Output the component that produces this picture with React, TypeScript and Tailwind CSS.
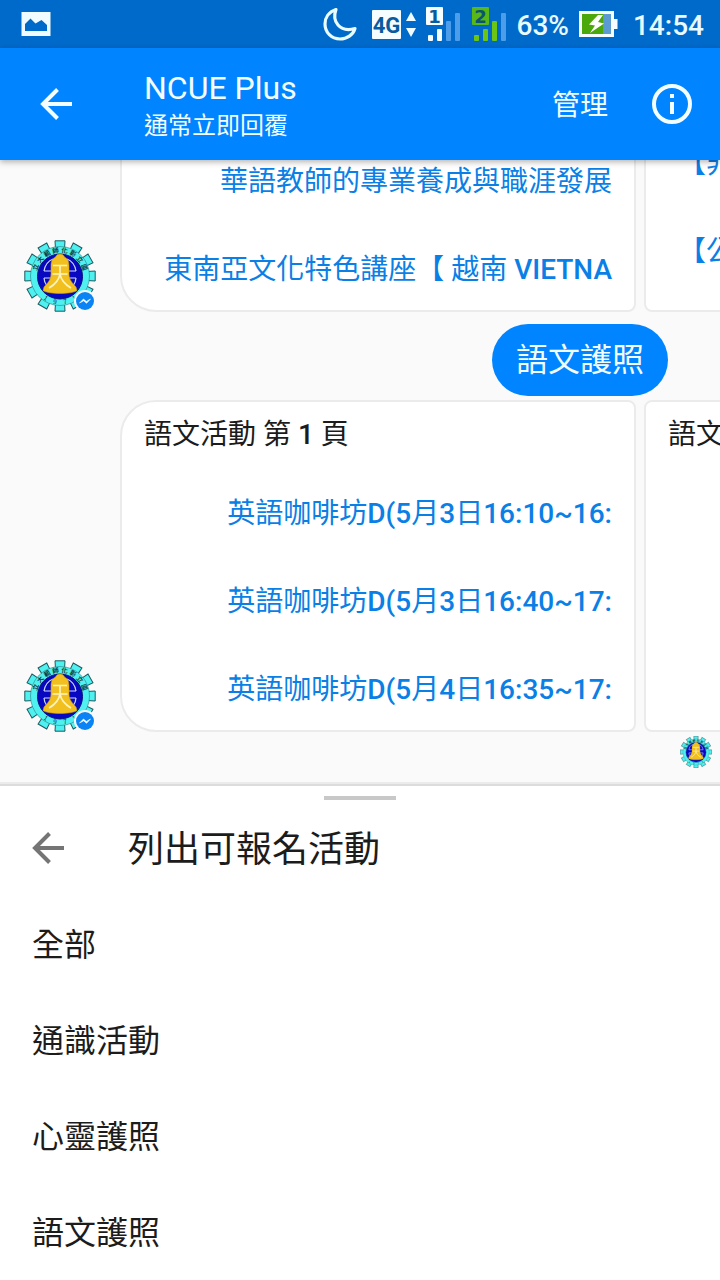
import React from "react";

const TEETH = Array.from({ length: 12 }, (_, i) => i * 30);
const SEAL_TOP = ["立", "大", "範", "師", "化", "彰", "立", "國"];
const SEAL_BOTTOM = ["1", "9", "7", "1"];

function Seal({ className }: { className: string }) {
  return (
    <svg viewBox="0 0 72 72" className={className} role="img" aria-label="NCUE">
      <g fill="#4ff0f0" stroke="#1d5a60" strokeWidth="1">
        {TEETH.map((a) => (
          <path key={a} d="M31.500 9 L31 .8 H41 L40.500 9" transform={`rotate(${a} 36 36)`} />
        ))}
      </g>
      <circle cx="36" cy="36" r="29.500" fill="#4ff0f0" stroke="#2b7f86" strokeWidth=".6" />
      <circle cx="36" cy="36.500" r="22.500" fill="#0808c0" stroke="#06107a" strokeWidth="1" />
      <g fontFamily="Noto Sans CJK TC, sans-serif" fontSize="6.500" fontWeight="700" fill="#0d3540" textAnchor="middle">
        {SEAL_TOP.map((c, i) => (
          <text key={i} x="36" y="12.500" transform={`rotate(${-70 + i * 20} 36 36)`}>{c}</text>
        ))}
        {SEAL_BOTTOM.map((c, i) => (
          <text key={i} x="36" y="64.500" fontWeight="400" transform={`rotate(${33 - i * 22} 36 36)`}>{c}</text>
        ))}
      </g>
      <g fill="none" stroke="#cfd8ff" strokeWidth="1.200">
        <path d="M20 31 C21 25 24 21 29 19 M20 31 H28 M52 31 C51 25 48 21 43 19 M52 31 H44 M20 38 H27 M45 38 H52 M23 46 C21 43 20 41 20 38 M49 46 C51 43 52 41 52 38" />
      </g>
      <path d="M36 14 C33.500 14 32 15.500 31.500 17 C28 18.500 27 22 27 26 V34 C27 40 23.500 43 20 47 L19 50.500 C24 54.500 48 54.500 53 50.500 L52 47 C48.500 43 45 40 45 34 V26 C45 22 44 18.500 40.500 17 C40 15.500 38.500 14 36 14Z" fill="#f2c01e" stroke="#c99812" strokeWidth=".6" />
      <path d="M29 25.500 H43 M28.500 34 H43.500 M36 25.500 V34 C35 40 31 44.500 25 48 M36 34 C37 40 41 44.500 47 48" fill="none" stroke="#fff3c0" strokeWidth="1.600" />
    </svg>
  );
}

function Avatar() {
  return (
    <div className="relative size-[72px] shrink-0 self-end">
      <Seal className="size-full" />
      <svg viewBox="0 0 22 22" className="absolute right-0 bottom-0 size-[22px]" aria-hidden="true">
        <circle cx="11" cy="11" r="11" fill="#fafafa" />
        <circle cx="11" cy="11" r="9" fill="#0a84f5" />
        <path d="M5.500 13 L9.500 9 L12.300 11.500 L16.500 9 L12.500 13.300 L9.700 10.800Z" fill="#fff" stroke="#fff" strokeWidth=".6" />
      </svg>
    </div>
  );
}

function BackIcon({ className }: { className: string }) {
  return (
    <svg viewBox="0 0 32 32" className={className} fill="none" stroke="currentColor" strokeWidth="4" aria-hidden="true">
      <path d="M32 16 H3 M17.500 1.500 L3 16 L17.500 30.500" />
    </svg>
  );
}

function StatusBar() {
  return (
    <div className="flex h-12 items-center bg-[#006acb] text-[28px] leading-8 font-medium text-[#e8fbff]">
      <svg viewBox="0 0 30 24" className="ml-[21px] h-6 w-[30px]" aria-hidden="true">
        <path fillRule="evenodd" fill="#f0fbff" d="M.5 0 H29.500 V24 H.5Z M4 19 V12 L9.500 6.500 L14.500 11.500 L20.500 8 L26 13 V19Z" />
      </svg>
      <div className="ml-auto flex items-center">
        <svg viewBox="0 0 34 34" className="size-[34px]" fill="none" stroke="#e8fbff" strokeWidth="3.200" strokeLinejoin="round" aria-hidden="true">
          <path d="M13 2.500 C5.500 5 2 11 2 17 C2 25.500 8.500 32 17 32 C24 32 30 28 32 21.500 C25 23.500 18.500 22 15 18 C11.500 14 11 8 13 2.500Z" />
        </svg>
        <svg viewBox="0 0 140 48" className="ml-3.5 h-12 w-[140px]" aria-label="4G" role="img">
          <rect x="1" y="10" width="29" height="29" rx="1" fill="#f5fdff" />
          <text x="15.500" y="32.500" textAnchor="middle" fontFamily="Roboto, sans-serif" fontWeight="700" fontSize="22" fill="#075b9e">4G</text>
          <path d="M40 12 L45 21 H35Z M40 37 L35 28 H45Z" fill="#f0fbff" />
          <rect x="55" y="7" width="17" height="18" rx="1" fill="#f5fdff" />
          <text x="63.500" y="22.500" textAnchor="middle" fontFamily="DejaVu Sans, sans-serif" fontWeight="700" fontSize="18" fill="#075b9e">1</text>
          <rect x="57" y="35" width="5" height="6" rx="1" fill="#f5fdff" />
          <rect x="66" y="29" width="5" height="12" rx="1" fill="#f5fdff" />
          <rect x="75" y="21" width="5" height="20" rx="1" fill="#4d9eea" />
          <rect x="84" y="13" width="5" height="28" rx="1" fill="#4d9eea" />
          <rect x="101" y="7" width="17" height="18" rx="1" fill="#57b817" />
          <text x="109.500" y="22.500" textAnchor="middle" fontFamily="DejaVu Sans, sans-serif" fontWeight="700" fontSize="18" fill="#08576f">2</text>
          <rect x="103" y="35" width="5" height="6" rx="1" fill="#6cc414" />
          <rect x="112" y="29" width="5" height="12" rx="1" fill="#6cc414" />
          <rect x="121" y="21" width="5" height="20" rx="1" fill="#6cc414" />
          <rect x="130" y="13" width="5" height="28" rx="1" fill="#4d9eea" />
        </svg>
        <span className="ml-1.5 pt-1">63%</span>
        <svg viewBox="0 0 40 28" className="ml-2.5 h-7 w-10" aria-hidden="true">
          <path d="M0 1 H35 V9 H38.500 V19 H35 V27 H0Z" fill="#f5fdff" />
          <rect x="3" y="4" width="21" height="20" fill="#4ba80b" />
          <rect x="24" y="4" width="8" height="20" fill="#5c9ad2" />
          <path d="M19 5 L10 14.500 L16 15.500 L11 23 L25 13.500 L19 12 L24 5Z" fill="#fff" />
        </svg>
        <span className="ml-3.5 pt-1 pr-4">14:54</span>
      </div>
    </div>
  );
}

function Header() {
  return (
    <header className="relative z-10 flex h-28 items-center bg-[#0084ff] pr-7 pl-10 text-[#f2feff] shadow-[0_2px_6px_rgba(0,0,0,0.3)]">
      <button type="button" aria-label="返回" className="mr-[72px]">
        <BackIcon className="size-8" />
      </button>
      <div className="min-w-0 flex-1 pt-1.5">
        <h1 className="text-[32px] leading-9">NCUE Plus</h1>
        <p className="pt-0.5 text-2xl leading-9">通常立即回覆</p>
      </div>
      <button type="button" className="mr-11 pt-1 text-[28px] leading-9">管理</button>
      <button type="button" aria-label="資訊">
        <svg viewBox="0 0 40 40" className="size-10" aria-hidden="true">
          <circle cx="20" cy="20" r="18" fill="none" stroke="currentColor" strokeWidth="4" />
          <path d="M18 10 H22 V14 H18Z M18 18 H22 V30 H18Z" fill="currentColor" />
        </svg>
      </button>
    </header>
  );
}

/** Sets Latin runs heavier than the Chinese text around them. */
function MixedText({ text }: { text: string }) {
  return (
    <span className="whitespace-pre">
      {text.split(/([\x21-\x7e]+)/).map((run, i) =>
        i % 2 === 1 ? <span key={i} className="font-medium">{run}</span> : run,
      )}
    </span>
  );
}

type CardData = { title: string; actions: string[]; wrapped?: boolean };

function Card({ card, first }: { card: CardData; first: boolean }) {
  const corners = first ? "rounded-l-[36px] rounded-r-lg" : "rounded-lg";
  return (
    <article className={`w-[86%] shrink-0 border-2 border-[#ebebeb] bg-white ${corners}`}>
      <h2 className="flex h-16 items-center px-[22px] pt-0.5 text-[28px] text-[#1c1c1c]">
        <MixedText text={card.title} />
      </h2>
      {card.actions.length > 0 && (
        <ul className="text-[28px] leading-9 text-[#0a7fe6]">
          {card.actions.map((label) => (
            <li key={label}>
              <button
                type="button"
                className={
                  card.wrapped
                    ? "flex h-[88px] w-full items-start pt-3 pl-8 text-left"
                    : "flex h-[88px] w-full items-center justify-end px-[22px] pt-2"
                }
              >
                <MixedText text={label} />
              </button>
            </li>
          ))}
        </ul>
      )}
    </article>
  );
}

function Carousel({ cards }: { cards: CardData[] }) {
  return (
    <div className="flex shrink-0 gap-6 pl-6">
      <Avatar />
      <div className="flex min-w-0 flex-1 gap-2 overflow-hidden">
        {cards.map((card, i) => (
          <Card key={i} card={card} first={i === 0} />
        ))}
      </div>
    </div>
  );
}

const LECTURES: CardData[] = [
  { title: "", actions: ["華語教師的專業養成與職涯發展", "東南亞文化特色講座【 越南 VIETNA"] },
  { title: "", actions: ["【非", "【公"], wrapped: true },
];

const LANGUAGE: CardData[] = [
  {
    title: "語文活動 第 1 頁",
    actions: ["英語咖啡坊D(5月3日16:10~16:", "英語咖啡坊D(5月3日16:40~17:", "英語咖啡坊D(5月4日16:35~17:"],
  },
  { title: "語文", actions: [] },
];

const MENU = ["全部", "通識活動", "心靈護照", "語文護照"];

export default function App() {
  return (
    <div className="flex h-screen flex-col overflow-hidden bg-[#fafafa] font-[Roboto,'Noto_Sans_CJK_TC',sans-serif]">
      <StatusBar />
      <Header />
      <main className="flex min-h-0 flex-1 flex-col justify-end overflow-hidden pb-3.5">
        <Carousel cards={LECTURES} />
        <p className="mt-3 mr-[52px] mb-1 flex h-[72px] shrink-0 items-center self-end rounded-full bg-[#0084ff] px-6 text-[32px] text-[#f2feff]">
          語文護照
        </p>
        <Carousel cards={LANGUAGE} />
        <Seal className="mt-1 mr-2 size-8 shrink-0 self-end" />
      </main>
      <section className="shrink-0 border-t-2 border-[#ebebeb] bg-white text-[#1c1c1c]">
        <div className="h-0.5 bg-[#dcdcdc]" />
        <div className="mx-auto mt-2.5 h-1 w-[72px] bg-[#c8c8c8]" />
        <div className="flex h-24 items-center gap-16 px-8">
          <button type="button" aria-label="返回" className="text-[#757575]">
            <BackIcon className="size-8" />
          </button>
          <h2 className="pt-1 text-4xl">列出可報名活動</h2>
        </div>
        <ul>
          {MENU.map((item) => (
            <li key={item}>
              <button type="button" className="flex h-24 w-full items-center px-8 pt-0.5 text-left text-[32px]">{item}</button>
            </li>
          ))}
        </ul>
      </section>
    </div>
  );
}
